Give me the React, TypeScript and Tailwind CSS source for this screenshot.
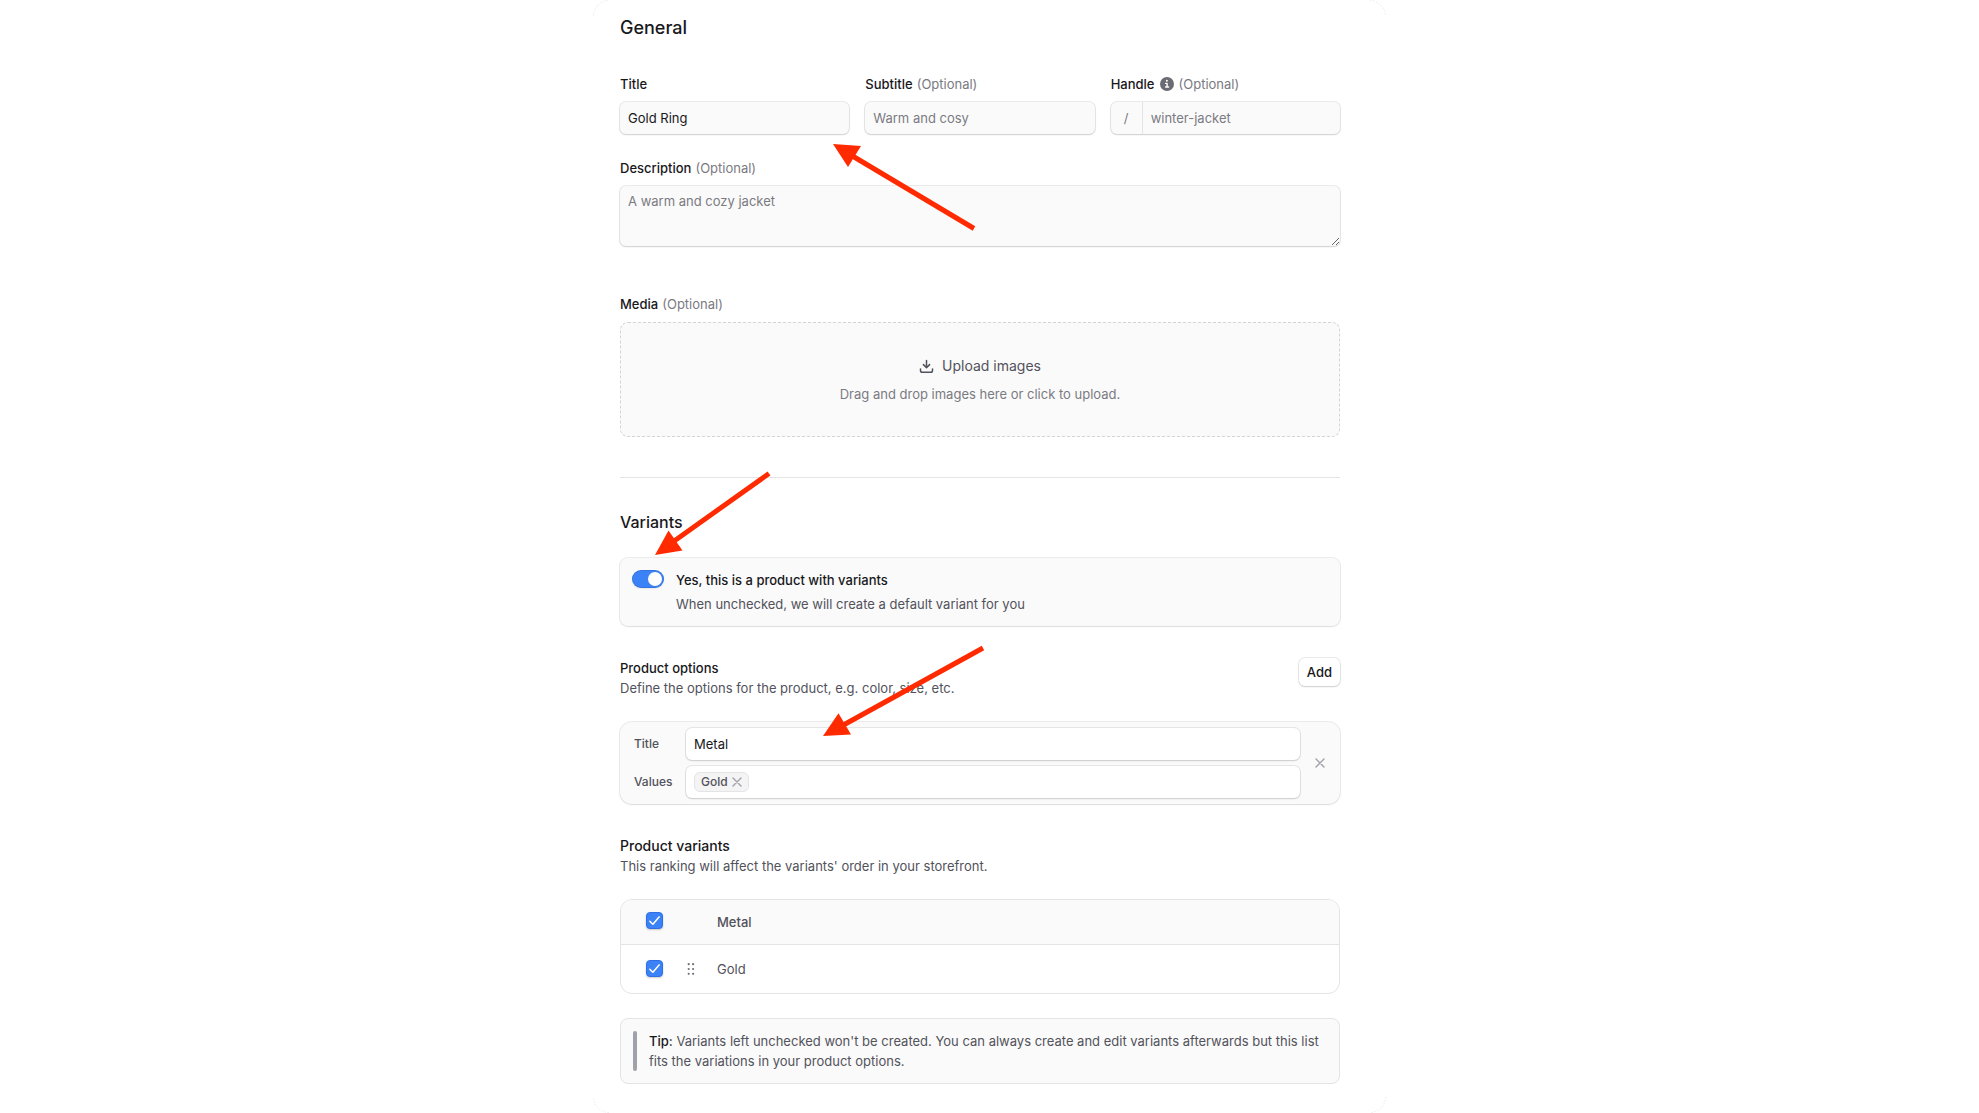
import { useState } from "react";
import type { ReactNode } from "react";

type Variant = {
  id: string;
  name: string;
  checked: boolean;
};

const DEFAULT_VARIANTS: Variant[] = [{ id: "gold", name: "Gold", checked: true }];

const FIELD_SHADOW =
  "shadow-[0_0_0_1px_rgba(0,0,0,0.08),0_1px_2px_0_rgba(0,0,0,0.12)]";
const CARD_SHADOW =
  "shadow-[0_0_0_1px_rgba(0,0,0,0.08),0_1px_2px_0_rgba(0,0,0,0.06)]";

function Label({
  htmlFor,
  children,
  optional = false,
  icon,
}: {
  htmlFor: string;
  children: ReactNode;
  optional?: boolean;
  icon?: ReactNode;
}) {
  return (
    <div className="flex items-center gap-1 leading-5">
      <label htmlFor={htmlFor} className="font-medium">
        {children}
      </label>
      {icon}
      {optional && <span className="text-[#7a7a82]">(Optional)</span>}
    </div>
  );
}

function InfoIcon() {
  return (
    <svg width="16" height="16" viewBox="0 0 16 16" aria-hidden="true">
      <circle cx="8" cy="8" r="7" fill="#6b6b74" />
      <circle cx="7.9" cy="4.8" r="1" fill="#fff" />
      <path
        d="M6.7 7.4h1.4v3.4M6.6 11h3"
        fill="none"
        stroke="#fff"
        strokeWidth="1.4"
        strokeLinecap="round"
        strokeLinejoin="round"
      />
    </svg>
  );
}

function UploadIcon() {
  return (
    <svg
      width="15"
      height="15"
      viewBox="0 0 15 15"
      fill="none"
      stroke="#52525b"
      strokeWidth="1.5"
      strokeLinecap="round"
      strokeLinejoin="round"
      aria-hidden="true"
    >
      <path d="M7.5 1.4v7M4.4 5.6l3.1 3.1 3.1-3.1" />
      <path d="M1.5 10v1.4c0 1 .8 1.8 1.8 1.8h8.4c1 0 1.8-.8 1.8-1.8V10" />
    </svg>
  );
}

function CloseIcon() {
  return (
    <svg
      width="10"
      height="10"
      viewBox="0 0 10 10"
      fill="none"
      stroke="#a1a1aa"
      strokeWidth="1.4"
      strokeLinecap="round"
      aria-hidden="true"
    >
      <path d="M1 1l8 8M9 1L1 9" />
    </svg>
  );
}

function DragDots() {
  return (
    <svg width="8" height="12" viewBox="0 0 8 12" fill="#71717a" aria-hidden="true">
      {[1.2, 6, 10.8].map((y) => (
        <g key={y}>
          <circle cx="1.7" cy={y} r="1.1" />
          <circle cx="6.1" cy={y} r="1.1" />
        </g>
      ))}
    </svg>
  );
}

function Checkbox({
  label,
  checked,
  onChange,
}: {
  label: string;
  checked: boolean;
  onChange: (checked: boolean) => void;
}) {
  return (
    <span className="relative block size-[17px]">
      <input
        type="checkbox"
        aria-label={label}
        checked={checked}
        onChange={(e) => onChange(e.target.checked)}
        className="peer block size-[17px] appearance-none rounded-[4px] border border-zinc-300 bg-white shadow-[0_1px_2px_0_rgba(0,0,0,0.2)] checked:border-[#2f6fe4] checked:bg-[#3b82f6]"
      />
      <svg
        className="pointer-events-none absolute inset-0 hidden peer-checked:block"
        width="17"
        height="17"
        viewBox="0 0 17 17"
        fill="none"
        stroke="#fff"
        strokeWidth="1.5"
        strokeLinecap="round"
        strokeLinejoin="round"
        aria-hidden="true"
      >
        <path d="M3.8 9.2l3.1 3.1 6.2-7.4" />
      </svg>
    </span>
  );
}

function Corner({ className }: { className: string }) {
  return (
    <svg
      className={`pointer-events-none absolute size-4 ${className}`}
      viewBox="0 0 16 16"
      fill="none"
      stroke="#e1e1e3"
      strokeDasharray="1 2"
      aria-hidden="true"
    >
      <path d="M.5 15.5A15.5 15.5 0 0 1 15.5.5" />
    </svg>
  );
}

// Red callouts pointing at the title, the variants switch and the option title
function Arrows() {
  return (
    <svg
      className="pointer-events-none absolute top-0 left-0"
      width="793"
      height="760"
      viewBox="593 0 793 760"
      stroke="#ff2a00"
      strokeWidth="5"
      fill="none"
      aria-hidden="true"
    >
      <path d="M974 228.500L850 154.500" />
      <path d="M833 144l28 2-13 21z" fill="#ff2a00" stroke="none" />
      <path d="M769 473.500L670 544" />
      <path d="M655 555l13.500-24.500L682.500 550.500z" fill="#ff2a00" stroke="none" />
      <path d="M983 648L838 728" />
      <path d="M823 736l15.500-22.800L851 734.500z" fill="#ff2a00" stroke="none" />
    </svg>
  );
}

export default function App() {
  const [title, setTitle] = useState("Gold Ring");
  const [hasVariants, setHasVariants] = useState(true);
  const [optionTitle, setOptionTitle] = useState("Metal");
  const [values, setValues] = useState<string[]>(["Gold"]);
  const [variants, setVariants] = useState<Variant[]>(DEFAULT_VARIANTS);

  const allChecked = variants.every((v) => v.checked);

  const toggleAll = (checked: boolean) => {
    setVariants((prev) => prev.map((v) => ({ ...v, checked })));
  };

  const toggleVariant = (id: string, checked: boolean) => {
    setVariants((prev) => prev.map((v) => (v.id === id ? { ...v, checked } : v)));
  };

  const removeValue = (value: string) => {
    setValues((prev) => prev.filter((v) => v !== value));
  };

  return (
    <div className="min-h-screen bg-white font-[Inter,sans-serif] text-[13px] leading-5 text-[#18181b]">
      <main className="relative mx-auto max-w-[793px] pt-3.5 pr-[46px] pb-[29px] pl-[27px]">
        <Corner className="top-0 left-0" />
        <Corner className="top-0 right-0 rotate-90" />
        <Corner className="right-0 bottom-0 rotate-180" />
        <Corner className="bottom-0 left-0 -rotate-90" />

        <section>
          <h1 className="text-lg leading-7 font-medium">General</h1>

          <div className="mt-8 grid grid-cols-3 gap-4">
            <div className="flex flex-col gap-2">
              <Label htmlFor="title">Title</Label>
              <input
                id="title"
                value={title}
                onChange={(e) => setTitle(e.target.value)}
                className={`h-8 w-full rounded-md bg-[#fafafa] px-2 outline-none ${FIELD_SHADOW}`}
              />
            </div>
            <div className="flex flex-col gap-2">
              <Label htmlFor="subtitle" optional>
                Subtitle
              </Label>
              <input
                id="subtitle"
                placeholder="Warm and cosy"
                className={`h-8 w-full rounded-md bg-[#fafafa] px-2 outline-none placeholder:text-[#7a7a82] ${FIELD_SHADOW}`}
              />
            </div>
            <div className="flex flex-col gap-2">
              <Label htmlFor="handle" optional icon={<InfoIcon />}>
                Handle
              </Label>
              <div className={`flex h-8 rounded-md bg-[#fafafa] ${FIELD_SHADOW}`}>
                <span className="flex w-8 shrink-0 items-center justify-center border-r border-zinc-200 text-[#7a7a82]">
                  /
                </span>
                <input
                  id="handle"
                  placeholder="winter-jacket"
                  className="w-full min-w-0 rounded-r-md bg-transparent px-2 outline-none placeholder:text-[#7a7a82]"
                />
              </div>
            </div>
          </div>

          <div className="mt-6 flex flex-col gap-2">
            <Label htmlFor="description" optional>
              Description
            </Label>
            <textarea
              id="description"
              placeholder="A warm and cozy jacket"
              className={`block h-[60px] w-full rounded-md bg-[#fafafa] px-2 py-[5px] outline-none placeholder:text-[#7a7a82] ${FIELD_SHADOW}`}
            />
          </div>

          <div className="mt-12 flex flex-col gap-2">
            <Label htmlFor="media" optional>
              Media
            </Label>
            <button
              id="media"
              type="button"
              className="flex flex-col items-center gap-2 rounded-lg border border-dashed border-zinc-300 bg-[#fafafa] px-4 pt-[33px] pb-8"
            >
              <span className="flex items-center gap-2 text-sm text-[#52525b]">
                <UploadIcon />
                Upload images
              </span>
              <span className="text-[#7a7a82]">
                Drag and drop images here or click to upload.
              </span>
            </button>
          </div>
        </section>

        <hr className="mt-10 mb-8 border-zinc-200" />

        <section>
          <h2 className="text-base leading-6 font-medium">Variants</h2>

          <div
            className={`mt-6 flex items-start gap-3 rounded-lg bg-[#fafafa] p-3 ${CARD_SHADOW}`}
          >
            <button
              id="has-variants"
              type="button"
              role="switch"
              aria-checked={hasVariants}
              onClick={() => setHasVariants((v) => !v)}
              className={`flex h-[18px] w-8 shrink-0 items-center rounded-full px-0.5 shadow-[inset_0_0_0_1px_rgba(0,0,0,0.1),0_1px_2px_0_rgba(0,0,0,0.08)] ${
                hasVariants ? "justify-end bg-[#3b82f6]" : "justify-start bg-zinc-200"
              }`}
            >
              <span className="size-3.5 rounded-full bg-white" />
            </button>
            <div className="flex flex-col gap-1">
              <label htmlFor="has-variants" className="font-medium">
                Yes, this is a product with variants
              </label>
              <p className="text-[#52525b]">
                When unchecked, we will create a default variant for you
              </p>
            </div>
          </div>
        </section>

        <section className="mt-8">
          <div className="flex items-start justify-between">
            <div>
              <h3 className="font-medium">Product options</h3>
              <p className="text-[#52525b]">
                Define the options for the product, e.g. color, size, etc.
              </p>
            </div>
            <button
              type="button"
              className={`h-7 rounded-md bg-white px-2 font-medium ${FIELD_SHADOW}`}
            >
              Add
            </button>
          </div>

          <div
            className={`mt-6 flex items-center rounded-xl bg-[#fafafa] p-1.5 ${CARD_SHADOW}`}
          >
            <div className="grid flex-1 grid-cols-[60px_1fr] items-center gap-y-1.5">
              <label
                htmlFor="option-title"
                className="px-2 text-xs font-medium text-[#52525b]"
              >
                Title
              </label>
              <input
                id="option-title"
                value={optionTitle}
                onChange={(e) => setOptionTitle(e.target.value)}
                className={`h-8 w-full rounded-md bg-white px-2 outline-none ${FIELD_SHADOW}`}
              />
              <label
                htmlFor="option-values"
                className="px-2 text-xs font-medium text-[#52525b]"
              >
                Values
              </label>
              <div
                className={`flex h-8 items-center gap-2 rounded-md bg-white px-2 ${FIELD_SHADOW}`}
              >
                {values.map((value) => (
                  <span
                    key={value}
                    className="flex h-5 items-center gap-1 rounded-md border border-zinc-200 bg-zinc-100 px-1.5 text-xs font-medium text-[#52525b]"
                  >
                    {value}
                    <button
                      type="button"
                      aria-label={`Remove ${value}`}
                      onClick={() => removeValue(value)}
                    >
                      <CloseIcon />
                    </button>
                  </span>
                ))}
                <input
                  id="option-values"
                  className="min-w-0 flex-1 bg-transparent outline-none"
                />
              </div>
            </div>
            <button
              type="button"
              aria-label="Remove option"
              className="ml-1.5 flex size-7 items-center justify-center"
            >
              <CloseIcon />
            </button>
          </div>
        </section>

        <section className="mt-8">
          <h3 className="text-sm leading-5 font-medium">Product variants</h3>
          <p className="text-[#52525b]">
            This ranking will affect the variants' order in your storefront.
          </p>

          <div className="mt-[23px] overflow-hidden rounded-xl border border-zinc-200">
            <table className="w-full text-left text-[#52525b]">
              <thead>
                <tr className="h-11 border-b border-zinc-200 bg-[#fafafa]">
                  <th className="w-[66px] pb-[3px] pl-[25px]">
                    <Checkbox
                      label="Select all variants"
                      checked={allChecked}
                      onChange={toggleAll}
                    />
                  </th>
                  <th className="w-[30px]" />
                  <th className="font-medium">{optionTitle}</th>
                </tr>
              </thead>
              <tbody>
                {variants.map((variant) => (
                  <tr key={variant.id} className="h-[49px]">
                    <td className="pl-[25px]">
                      <Checkbox
                        label={variant.name}
                        checked={variant.checked}
                        onChange={(checked) => toggleVariant(variant.id, checked)}
                      />
                    </td>
                    <td>
                      <button type="button" aria-label="Reorder" className="block">
                        <DragDots />
                      </button>
                    </td>
                    <td>{variant.name}</td>
                  </tr>
                ))}
              </tbody>
            </table>
          </div>

          <div className="mt-6 flex gap-3 rounded-lg border border-zinc-200 bg-[#fafafa] p-3">
            <div className="w-1 shrink-0 rounded-full bg-[#a1a1aa]" />
            <p className="text-[#52525b]">
              <strong className="font-medium text-[#18181b]">Tip:</strong> Variants left
              unchecked won't be created. You can always create and edit variants
              afterwards but this list fits the variations in your product options.
            </p>
          </div>
        </section>

        <Arrows />
      </main>
    </div>
  );
}
